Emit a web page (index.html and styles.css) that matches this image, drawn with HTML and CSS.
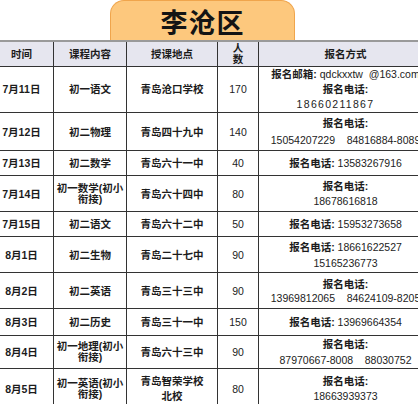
FILE: index.html
```html
<!DOCTYPE html>
<html lang="zh-CN">
<head>
<meta charset="utf-8">
<title>李沧区</title>
<link rel="stylesheet" href="styles.css">
</head>
<body>
<div class="tab"><span class="tab-title">李沧区</span></div>
<table class="sched">
  <colgroup>
    <col class="c1"><col class="c2"><col class="c3"><col class="c4"><col class="c5">
  </colgroup>
  <thead>
    <tr class="h25"><th>时间</th><th>课程内容</th><th>授课地点</th><th class="tight">人<br>数</th><th>报名方式</th></tr>
  </thead>
  <tbody>
    <tr class="h46"><td class="d">7月11日</td><td class="b">初一语文</td><td class="b">青岛沧口学校</td><td class="n">170</td><td class="m l155"><span class="lbl">报名邮箱:</span> qdckxxtw&nbsp; @163.com<br><span class="lbl">报名电话:</span><br><span class="wide">18660211867</span></td></tr>
    <tr class="h38"><td class="d">7月12日</td><td class="b">初二物理</td><td class="b">青岛四十九中</td><td class="n">140</td><td class="m l17"><span class="lbl">报名电话:</span><br>15054207229&nbsp;&nbsp;&nbsp; 84816884-8089</td></tr>
    <tr class="h25"><td class="d">7月13日</td><td class="b">初二数学</td><td class="b">青岛六十一中</td><td class="n">40</td><td class="m"><span class="lbl">报名电话:</span> 13583267916</td></tr>
    <tr class="h36"><td class="d">7月14日</td><td class="b tight">初一数学(初小<br>衔接)</td><td class="b">青岛六十四中</td><td class="n">80</td><td class="m l15"><span class="lbl">报名电话:</span><br>18678616818</td></tr>
    <tr class="h25"><td class="d">7月15日</td><td class="b">初二语文</td><td class="b">青岛六十二中</td><td class="n">50</td><td class="m"><span class="lbl">报名电话:</span> 15953273658</td></tr>
    <tr class="h36"><td class="d">8月1日</td><td class="b">初二生物</td><td class="b">青岛二十七中</td><td class="n">90</td><td class="m"><span class="lbl">报名电话:</span> 18661622527<br>15165236773</td></tr>
    <tr class="h36"><td class="d">8月2日</td><td class="b">初二英语</td><td class="b">青岛三十三中</td><td class="n">90</td><td class="m l14"><span class="lbl">报名电话:</span><br>13969812065&nbsp;&nbsp;&nbsp; 84624109-8205</td></tr>
    <tr class="h27"><td class="d">8月3日</td><td class="b">初二历史</td><td class="b">青岛三十一中</td><td class="n">150</td><td class="m"><span class="lbl">报名电话:</span> 13969664354</td></tr>
    <tr class="h33"><td class="d">8月4日</td><td class="b tight">初一地理(初小<br>衔接)</td><td class="b">青岛六十三中</td><td class="n">90</td><td class="m"><span class="lbl">报名电话:</span><br>87970667-8008&nbsp;&nbsp;&nbsp; 88030752</td></tr>
    <tr class="h40"><td class="d">8月5日</td><td class="b tight">初一英语(初小<br>衔接)</td><td class="b l15">青岛智荣学校<br>北校</td><td class="n">80</td><td class="m l15"><span class="lbl">报名电话:</span><br>18663939373</td></tr>
  </tbody>
</table>
</body>
</html>
```
FILE: styles.css
```css
html, body {
  margin: 0;
  padding: 0;
  overflow: hidden;
  background: #ffffff;
}

body {
  font-family: "Liberation Sans", "Noto Sans CJK SC", sans-serif;
  color: #1c1c1c;
}

.tab {
  margin-left: 110px;
  width: 185px;
  height: 40px;
  box-sizing: border-box;
  background: #fdc87d;
  border: 1px solid #f0a54c;
  border-bottom: none;
  border-radius: 14px 14px 0 0;
  display: flex;
  align-items: center;
  justify-content: center;
  padding-top: 1px;
}

.tab-title {
  font-family: "Noto Sans CJK SC", sans-serif;
  font-size: 27px;
  font-weight: 700;
  letter-spacing: 1px;
  color: #141414;
  line-height: 1;
}

.sched {
  border-collapse: collapse;
  table-layout: fixed;
  width: 443px;
  margin-left: -11px;
  font-size: 10.5px;
}

.c1 { width: 64px; }
.c2 { width: 73px; }
.c3 { width: 91px; }
.c4 { width: 41px; }
.c5 { width: 174px; }

.sched th,
.sched td {
  border: 1.5px solid #333333;
  padding: 0 2px;
  text-align: center;
  vertical-align: middle;
  line-height: 16px;
  font-weight: 400;
  white-space: nowrap;
}

.sched th {
  background: #e6e6ef;
  font-weight: 700;
  border-top: 2px solid #9a9a9a;
}

.sched td.d,
.sched td.b,
.sched .lbl {
  font-weight: 700;
}

.sched .tight {
  line-height: 11px;
}

.sched .l17 { line-height: 17px; }
.sched .l155 { line-height: 15.3px; }
.sched .l15 { line-height: 15px; }
.sched .l14 { line-height: 14px; }

.wide {
  display: inline-block;
  letter-spacing: 1.3px;
  margin-right: 20px;
}

.h25 { height: 25px; }
.h27 { height: 27px; }
.h33 { height: 33px; }
.h36 { height: 36px; }
.h38 { height: 38px; }
.h40 { height: 40px; }
.h46 { height: 46px; }
```
